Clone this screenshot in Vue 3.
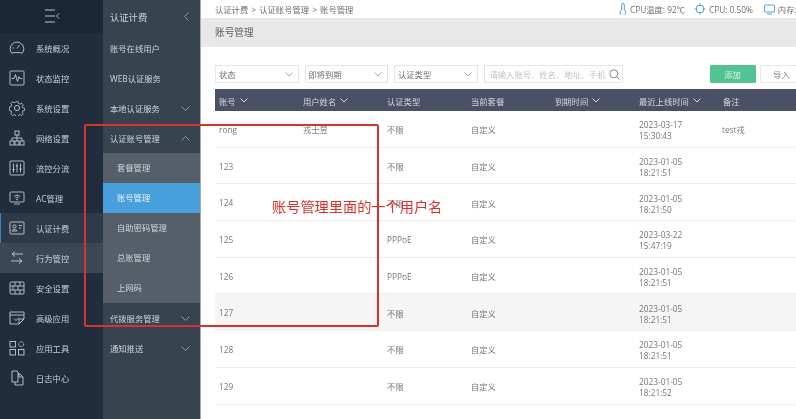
<script setup>
const rows = [
  { id: 'rong', name: '戎士昱', type: '不限', time: ['2023-03-17', '15:30:43'], note: 'test戎' },
  { id: '123', name: '', type: '不限', time: ['2023-01-05', '18:21:51'], note: '' },
  { id: '124', name: '', type: '不限', time: ['2023-01-05', '18:21:50'], note: '' },
  { id: '125', name: '', type: 'PPPoE', time: ['2023-03-22', '15:47:19'], note: '' },
  { id: '126', name: '', type: 'PPPoE', time: ['2023-01-05', '18:21:51'], note: '' },
  { id: '127', name: '', type: '不限', time: ['2023-01-05', '18:21:51'], note: '', hover: true },
  { id: '128', name: '', type: '不限', time: ['2023-01-05', '18:21:51'], note: '' },
  { id: '129', name: '', type: '不限', time: ['2023-01-05', '18:21:52'], note: '' },
  { id: '', name: '', type: '', time: ['2023-01-05', ''], note: '' }
]
const heads = [
  { t: '账号', arrow: true }, { t: '用户姓名', arrow: true }, { t: '认证类型' }, { t: '当前套餐' },
  { t: '到期时间', arrow: true }, { t: '最近上线时间', arrow: true }, { t: '备注' }
]
const nav = ['系统概况', '状态监控', '系统设置', '网络设置', '流控分流', 'AC管理', '认证计费', '行为管控', '安全设置', '高级应用', '应用工具', '日志中心']
const sub = [
  { t: '账号在线用户' }, { t: 'WEB认证服务' }, { t: '本地认证服务', c: 'down' }, { t: '认证账号管理', c: 'up', open: true },
]
const kids = [{ t: '套餐管理' }, { t: '账号管理', active: true }, { t: '自助密码管理' }, { t: '总账管理' }, { t: '上网码' }]
const filters = ['状态', '即将到期', '认证类型']
</script>

<template>
  <div class="app">
    <aside class="rail">
      <div class="logo">
        <svg width="16" height="14" viewBox="0 0 16 14" fill="none" stroke="#b9c2cc" stroke-width="1"><path d="M1 1h10M1 7h10M1 13h10M15 4.500l-2.500 2.500 2.500 2.500"/></svg>
      </div>
      <div v-for="(n, i) in nav" :key="n" class="nav" :class="{ on: i === 6, hov: i === 7 }">
        <svg class="ic" width="16" height="16" viewBox="0 0 16 16" fill="none" stroke="#c3cbd3" stroke-width="0.9">
          <g v-if="i === 0"><path d="M3 13.500A6.800 6.800 0 1 1 13 13.500L11.800 12.600H4.200Z"/><path d="M8 8.500L10.500 5M3.500 8h1.500"/></g>
          <g v-else-if="i === 1"><rect x="1" y="1" width="14" height="14" rx="1"/><path d="M2.500 8.500h2.500l1.500-4 2 7 1.500-5 1 2h2.500"/></g>
          <g v-else-if="i === 2"><path d="M6.700 1h2.600l.4 2 1.600.7 1.800-1.100 1.800 1.800-1.100 1.800.7 1.600 2 .4v2.600l-2 .4-.7 1.600 1.100 1.800-1.800 1.800-1.800-1.100-1.600.7-.4 2H6.700l-.4-2-1.600-.7-1.800 1.100-1.800-1.800 1.100-1.800-.7-1.600-2-.4V6.700l2-.4.7-1.600-1.100-1.800 1.800-1.800 1.800 1.100 1.600-.7z" transform="translate(.8 .8) scale(.9)"/><circle cx="8" cy="8" r="2.600"/></g>
          <g v-else-if="i === 3"><rect x="6" y="1" width="4" height="4"/><rect x="1" y="11" width="4" height="4"/><rect x="6" y="11" width="4" height="4"/><rect x="11" y="11" width="4" height="4"/><path d="M8 5v6M3 11V8h10v3"/></g>
          <g v-else-if="i === 4"><rect x="1" y="1" width="14" height="14" rx="1"/><path d="M4.500 3.500v9M8 3.500v9M11.500 3.500v9M3.300 9.500h2.400M6.800 6h2.400M10.300 9h2.400"/></g>
          <g v-else-if="i === 5"><rect x="1" y="2" width="14" height="10" rx="1"/><path d="M5 14h6M5 6.500a4 4 0 0 1 6 0M6.300 8a2.200 2.200 0 0 1 3.400 0"/><circle cx="8" cy="9.500" r=".5"/></g>
          <g v-else-if="i === 6"><rect x="1" y="2" width="14" height="12" rx="1"/><circle cx="5.500" cy="6.500" r="1.600"/><path d="M3 11c.4-2 4.600-2 5 0zM10 5.500h3M10 8h2"/></g>
          <g v-else-if="i === 7"><path d="M14 4H3M6 1.500L3 4M3 4l3 2.500M2 11h11M10 8.500l3 2.500-3 2.500"/></g>
          <g v-else-if="i === 8"><rect x="1" y="2" width="14" height="12" rx="1"/><path d="M1 6h14M1 10h14M6 2v4M11 2v4M4 6v4M9 6v4M6 10v4M11 10v4"/></g>
          <g v-else-if="i === 9"><path d="M15 9V2H1v12h9zM1 5h14M15 9l-5 5V9z"/><path d="M5 8.500l2 2 3-3"/></g>
          <g v-else-if="i === 10"><rect x="1" y="1.500" width="5.500" height="5.500"/><rect x="1" y="9.500" width="5.500" height="5.500"/><rect x="9.500" y="9.500" width="5.500" height="5.500"/><circle cx="12.200" cy="4.200" r="2.500" stroke-dasharray="1.500 .6"/></g>
          <g v-else><path d="M3 1h5l1 1v10H3zM9 4h2l3 3v8H6v-3M10 4v3h4"/></g>
        </svg>
        <span>{{ n }}</span>
      </div>
    </aside>

    <aside class="subnav">
      <div class="sub-head">
        <span>认证计费</span>
        <svg width="5" height="9" viewBox="0 0 5 9" fill="none" stroke="#8e98a4"><path d="M4.500.500L.500 4.500l4 4"/></svg>
      </div>
      <div v-for="s in sub" :key="s.t" class="sub-item">
        <span>{{ s.t }}</span>
        <svg v-if="s.c" width="9" height="5" viewBox="0 0 9 5" fill="none" stroke="#8e98a4"><path :d="s.c === 'up' ? 'M.5 4.500l4-4 4 4' : 'M.5.500l4 4 4-4'"/></svg>
      </div>
      <div class="kids">
        <div v-for="k in kids" :key="k.t" class="kid" :class="{ active: k.active }">{{ k.t }}</div>
      </div>
      <div class="sub-item">
        <span>代拨服务管理</span>
        <svg width="9" height="5" viewBox="0 0 9 5" fill="none" stroke="#8e98a4"><path d="M.5.500l4 4 4-4"/></svg>
      </div>
      <div class="sub-item">
        <span>通知推送</span>
        <svg width="9" height="5" viewBox="0 0 9 5" fill="none" stroke="#8e98a4"><path d="M.5.500l4 4 4-4"/></svg>
      </div>
    </aside>

    <main class="main">
      <div class="top">
        <div class="crumb">认证计费 &gt; 认证账号管理 &gt; 账号管理</div>
        <div class="stats">
          <span class="stat">
            <svg width="8" height="12" viewBox="0 0 8 12" fill="none" stroke="#4a9fe0"><path d="M2.700 7V1.800a1.300 1.300 0 0 1 2.600 0V7a2.900 2.900 0 1 1-2.600 0z"/></svg>
            CPU温度: 92℃
          </span>
          <span class="stat">
            <svg width="12" height="12" viewBox="0 0 12 12" fill="none" stroke="#4a9fe0"><rect x="2.500" y="2.500" width="7" height="7" rx="2"/><path d="M6 .500v2M6 9.500v2M.5 6h2M9.500 6h2"/></svg>
            CPU: 0.50%
          </span>
          <span class="stat mem">
            <svg width="11" height="11" viewBox="0 0 11 11" fill="none" stroke="#4a9fe0"><rect x=".5" y="1" width="10" height="7" rx="1"/><path d="M3 10h5"/></svg>
            内存: 31%
          </span>
        </div>
      </div>
      <div class="title">账号管理</div>
      <div class="filters">
        <div v-for="f in filters" :key="f" class="select">
          <span>{{ f }}</span>
          <svg width="8" height="5" viewBox="0 0 8 5" fill="none" stroke="#a8a8a8"><path d="M.5.500L4 4 7.500.500"/></svg>
        </div>
        <div class="search">
          <span>请输入账号、姓名、地址、手机</span>
          <svg width="11" height="11" viewBox="0 0 11 11" fill="none" stroke="#8a8a8a"><circle cx="4.800" cy="4.800" r="4"/><path d="M7.700 7.700l2.800 2.800"/></svg>
        </div>
        <button class="btn add">添加</button>
        <button class="btn imp">导入</button>
      </div>
      <div class="table">
        <div class="row head">
          <div v-for="h in heads" :key="h.t" class="cell">
            {{ h.t }}
            <svg v-if="h.arrow" width="8" height="5" viewBox="0 0 8 5" fill="none" stroke="#d5d8de"><path d="M.5.500L4 4 7.500.500"/></svg>
          </div>
        </div>
        <div v-for="(r, i) in rows" :key="i" class="row body" :class="{ hover: r.hover }">
          <div class="cell">{{ r.id }}</div>
          <div class="cell">{{ r.name }}</div>
          <div class="cell">{{ r.type }}</div>
          <div class="cell">{{ r.type ? '自定义' : '' }}</div>
          <div class="cell"></div>
          <div class="cell time"><div>{{ r.time[0] }}</div><div>{{ r.time[1] }}</div></div>
          <div class="cell note">{{ r.note }}</div>
        </div>
      </div>
    </main>

    <div class="mark"></div>
    <div class="mark-text">账号管理里面的一个用户名</div>
  </div>
</template>

<style scoped>
.app {
  position: relative;
  width: 796px;
  height: 419px;
  display: flex;
  overflow: hidden;
  font-family: "Open Sans", "Noto Sans CJK SC", sans-serif;
  background: #fff;
  filter: blur(0.3px);
}
.rail {
  width: 103px;
  flex: none;
  background: #1f2d3d;
  color: #c6ced6;
  font-size: 8.300px;
}
.logo {
  height: 33px;
  background: #1a2736;
  display: flex;
  align-items: center;
  justify-content: center;
  padding-bottom: 2px;
  box-sizing: border-box;
}
.nav {
  height: 30px;
  display: flex;
  align-items: center;
  gap: 11px;
  padding-left: 9px;
}
.nav.on { background: #2c3a4a; border-left: 1px solid #3f86c6; padding-left: 8px; }
.nav.hov { background: #3b4755; }
.ic { flex: none; }
.subnav {
  width: 97px;
  flex: none;
  background: #37444f;
  color: #ced4da;
  font-size: 8.300px;
}
.sub-head {
  height: 33px;
  padding: 0 11px 0 7px;
  display: flex;
  align-items: center;
  justify-content: space-between;
  font-size: 9.300px;
}
.sub-item {
  height: 30px;
  padding: 0 10px 0 7px;
  display: flex;
  align-items: center;
  justify-content: space-between;
}
.kids {
  background: #565e69;
}
.kid {
  height: 30px;
  line-height: 30px;
  padding-left: 14px;
}
.kid.active { background: #4a9fdd; color: #e6f1fa; }
.main {
  flex: 1;
  min-width: 0;
  border-left: 1px solid #a3adc0;
  color: #6f6f6f;
  font-size: 8.300px;
}
.top {
  height: 18px;
  display: flex;
  align-items: center;
  justify-content: space-between;
  padding-left: 14px;
}
.crumb { flex: none; word-spacing: 1px; }
.stats {
  flex: none;
  display: flex;
  gap: 9px;
  width: 177px;
  white-space: nowrap;
}
.stat { display: flex; align-items: center; gap: 3px; flex: none; }
.mem { margin-left: 2px; }
.title {
  height: 29px;
  line-height: 29px;
  background: #e8e8e8;
  padding-left: 14px;
  font-size: 9.700px;
  color: #606060;
}
.filters {
  height: 42px;
  padding: 18px 0 6px 14px;
  box-sizing: border-box;
  display: flex;
  gap: 6px;
  white-space: nowrap;
}
.select, .search {
  box-sizing: border-box;
  height: 18px;
  border: 1px solid #e6e6e6;
  display: flex;
  align-items: center;
  justify-content: space-between;
  padding: 0 2px 0 3px;
  flex: none;
}
.select { width: 83.500px; padding-right: 5px; }
.search { width: 139px; color: #c2c2c2; font-size: 8.300px; padding-left: 5px; }
.btn {
  box-sizing: border-box;
  height: 18px;
  border: 1px solid #e6e6e6;
  border-radius: 1px;
  font: inherit;
  padding: 0;
  flex: none;
}
.add { width: 46px; margin-left: 81px; background: #52c393; color: #dff5ec; border-color: #52c393; }
.imp { width: 44px; margin-left: -2px; background: #fff; color: #888; }
.table { margin-left: 14px; }
.row {
  display: grid;
  grid-template-columns: repeat(7, 84px);
  align-items: center;
}
.head {
  height: 22px;
  background: #4a5167;
  color: #d5d8de;
}
.cell { padding: 1px 0 0 4px; min-width: 0; white-space: nowrap; display: flex; align-items: center; gap: 4px; }
.note { padding-left: 3px; }
.body {
  height: 36.700px;
  box-sizing: border-box;
  border-bottom: 1px solid #eeeeee;
  color: #777;
}
.body.hover { background: #f5f5f5; }
.time { display: block; line-height: 11px; padding-top: 3px; }
.mark {
  position: absolute;
  left: 84px;
  top: 124px;
  width: 295px;
  height: 203px;
  box-sizing: border-box;
  border: 2px solid #d8322f;
  border-radius: 2px;
  pointer-events: none;
}
.mark-text {
  position: absolute;
  left: 272px;
  top: 197px;
  color: #e0302c;
  font-size: 14.200px;
  line-height: 20px;
  white-space: nowrap;
}
</style>
